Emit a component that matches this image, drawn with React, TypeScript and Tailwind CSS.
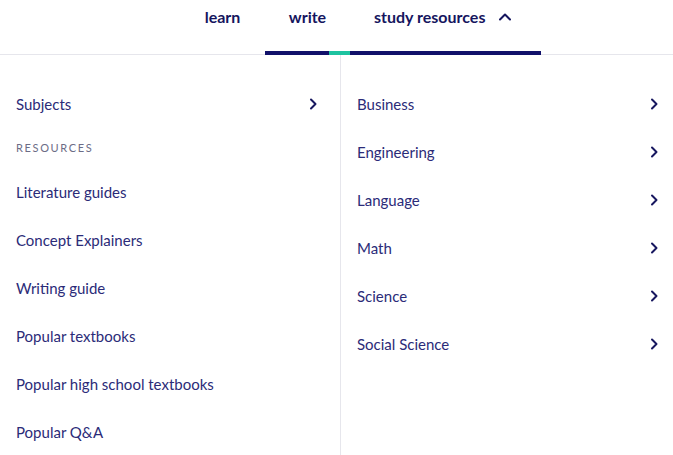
import React from "react";

const leftItems = [
  "Literature guides",
  "Concept Explainers",
  "Writing guide",
  "Popular textbooks",
  "Popular high school textbooks",
  "Popular Q&A",
];

const subjects = [
  "Business",
  "Engineering",
  "Language",
  "Math",
  "Science",
  "Social Science",
];

function Chevron() {
  return (
    <svg width="10" height="12" viewBox="0 0 10 12" fill="none">
      <path
        d="M3 1.5 L7.5 6 L3 10.5"
        stroke="#17175f"
        strokeWidth="2"
        strokeLinecap="round"
        strokeLinejoin="round"
      />
    </svg>
  );
}

export default function App() {
  return (
    <div
      className="w-[673px] h-[455px] overflow-hidden bg-white"
      style={{ fontFamily: "Lato, 'Open Sans', sans-serif" }}
    >
      {/* top nav */}
      <div className="h-[55px] flex flex-col border-b border-[#e6e6ec]">
        <div className="h-[34px] flex items-center pl-[180px] text-[16px] font-bold text-[#15155e]">
          <div className="w-[85px] flex justify-center">learn</div>
          <div className="w-[85px] flex justify-center">write</div>
          <div className="pl-[24px] flex items-center gap-[13px]">
            <span>study resources</span>
            <svg width="14" height="10" viewBox="0 0 14 10" fill="none">
              <path
                d="M2 7.5 L7 2.5 L12 7.5"
                stroke="#15155e"
                strokeWidth="2"
                strokeLinecap="round"
                strokeLinejoin="round"
              />
            </svg>
          </div>
        </div>
        <div className="flex-1" />
        <div className="h-[4px] flex ml-[265px] -mb-px">
          <div className="w-[64px] bg-[#11116a]" />
          <div className="w-[21px] bg-[#1dc3a0]" />
          <div className="w-[191px] bg-[#11116a]" />
        </div>
      </div>

      {/* dropdown */}
      <div className="flex h-[400px] text-[15px] text-[#2b2b78]">
        <div className="w-[341px] border-r border-[#e6e6ec] pt-[25px] pl-[16px] pr-[22px]">
          <div className="h-[48px] flex items-center justify-between">
            <span>Subjects</span>
            <Chevron />
          </div>
          <div className="h-[40px] flex items-center text-[11px] tracking-[0.15em] text-[#6c6c86]">
            RESOURCES
          </div>
          {leftItems.map((item) => (
            <div key={item} className="h-[48px] flex items-center">
              {item}
            </div>
          ))}
        </div>
        <div className="flex-1 pt-[25px] pl-[16px] pr-[14px]">
          {subjects.map((s) => (
            <div key={s} className="h-[48px] flex items-center justify-between">
              <span>{s}</span>
              <Chevron />
            </div>
          ))}
        </div>
      </div>
    </div>
  );
}
